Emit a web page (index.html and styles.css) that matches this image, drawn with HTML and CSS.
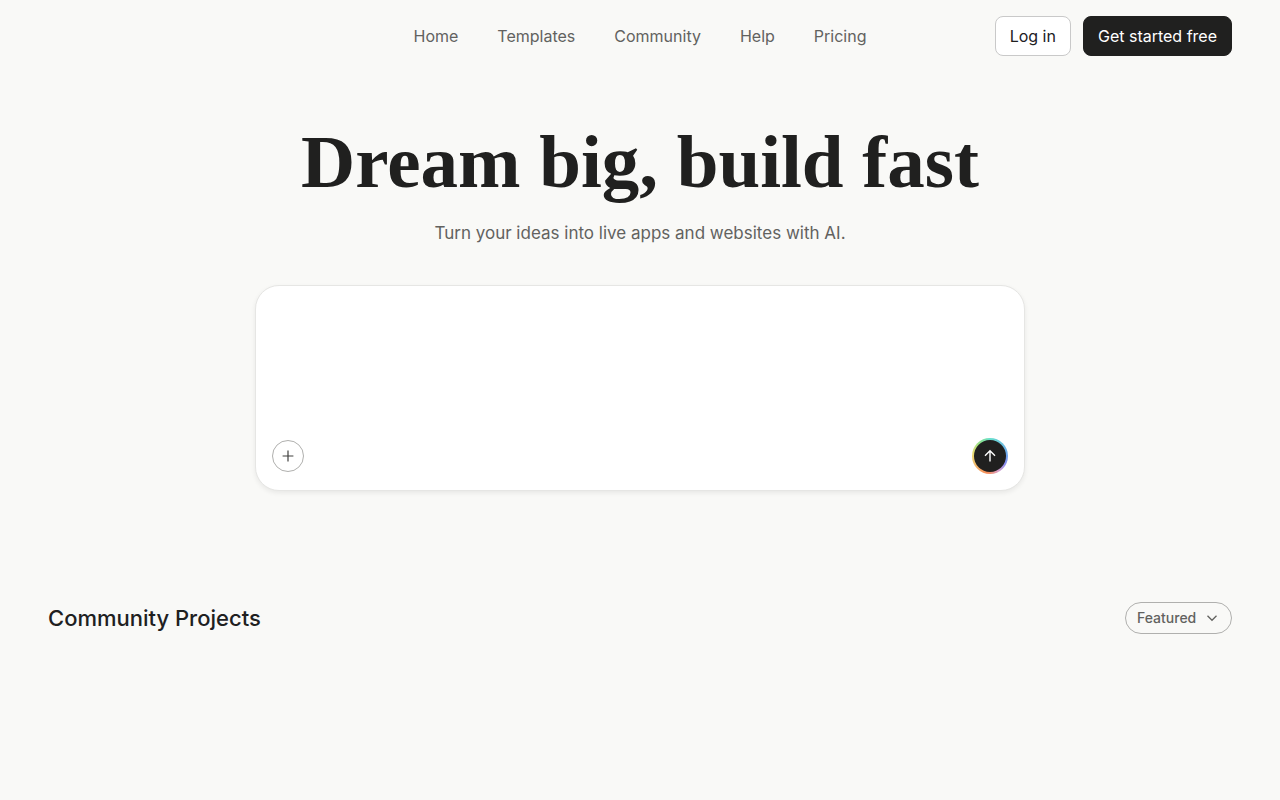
FILE: index.html
```html
<!DOCTYPE html>
<html lang="en">
<head>
<meta charset="utf-8">
<meta name="viewport" content="width=device-width, initial-scale=1">
<title>Dream big, build fast</title>
<link rel="stylesheet" href="styles.css">
</head>
<body>
<header class="site-header">
  <nav class="nav" aria-label="Main">
    <a href="#">Home</a>
    <a href="#">Templates</a>
    <a href="#">Community</a>
    <a href="#">Help</a>
    <a href="#">Pricing</a>
  </nav>
  <div class="actions">
    <button class="button button-light" type="button">Log in</button>
    <button class="button button-dark" type="button">Get started free</button>
  </div>
</header>
<main>
  <section class="hero">
    <h1 class="hero-title">Dream big, build fast</h1>
    <p class="hero-text">Turn your ideas into live apps and websites with AI.</p>
    <form class="prompt">
      <textarea class="prompt-input" aria-label="Describe your idea"></textarea>
      <div class="prompt-bar">
        <button class="round attach" type="button" aria-label="Add attachment">
          <svg width="16" height="16" viewBox="0 0 16 16" fill="none" stroke="currentColor" stroke-width="1.2"><path d="M8 2.6v10.8M2.6 8h10.8"/></svg>
        </button>
        <button class="round send" type="button" aria-label="Send">
          <svg width="16" height="16" viewBox="0 0 16 16" fill="none" stroke="currentColor" stroke-width="1.4"><path d="M8 13.5V3M3 7.8 8 2.8l5 5"/></svg>
        </button>
      </div>
    </form>
  </section>
  <section class="projects">
    <h2 class="projects-title">Community Projects</h2>
    <div class="filter">
      <select class="filter-select" aria-label="Filter projects">
        <option>Featured</option>
      </select>
      <svg class="filter-icon" width="12" height="12" viewBox="0 0 12 12" fill="none" stroke="currentColor" stroke-width="1.3"><path d="m1.5 3.8 4.5 4.5 4.5-4.5"/></svg>
    </div>
  </section>
</main>
</body>
</html>
```
FILE: styles.css
```css
* {
  box-sizing: border-box;
}

body {
  margin: 0;
  background: #f9f9f7;
  color: #20201f;
  font-family: Inter, "Liberation Sans", sans-serif;
}

.site-header {
  display: grid;
  grid-template-columns: 1fr auto 1fr;
  align-items: center;
  padding: 16px 48px;
}

.nav {
  grid-column: 2;
  display: flex;
  gap: 39px;
  font-size: 16px;
  line-height: 24px;
}

.nav a {
  color: #62625f;
  text-decoration: none;
}

.actions {
  display: flex;
  justify-content: flex-end;
  gap: 12px;
}

.button {
  height: 40px;
  padding: 0 14px;
  border: 1px solid #c9c9c9;
  border-radius: 8px;
  font: 400 16px/24px Inter, "Liberation Sans", sans-serif;
  white-space: nowrap;
}

.button-light {
  background: #fff;
  color: #20201f;
}

.button-dark {
  border-color: #20201f;
  background: #20201f;
  color: #fff;
}

.hero {
  display: flex;
  flex-direction: column;
  align-items: center;
  padding: 34px 24px 0;
}

.hero-title {
  margin: 0;
  font-family: "Liberation Serif", serif;
  font-size: 75px;
  font-weight: 700;
  line-height: 112px;
  text-align: center;
}

.hero-text {
  margin: 1px 0 0;
  color: #62625f;
  font-size: 17px;
  line-height: 28px;
  text-align: center;
}

.prompt {
  width: 100%;
  max-width: 770px;
  margin: 38px 0 0;
  padding: 16px;
  border: 1px solid #e6e6e4;
  border-radius: 24px;
  background: #fff;
  box-shadow: 0 2px 5px rgba(0, 0, 0, 0.07);
}

.prompt-input {
  display: block;
  width: 100%;
  height: 136px;
  padding: 0;
  border: 0;
  outline: 0;
  background: transparent;
  font: inherit;
  resize: none;
}

.prompt-bar {
  display: flex;
  align-items: center;
  justify-content: space-between;
}

.round {
  display: grid;
  place-items: center;
  padding: 0;
  border-radius: 50%;
}

.attach {
  width: 32px;
  height: 32px;
  border: 1px solid #b0b0ae;
  background: #fff;
  color: #40403e;
}

.send {
  width: 36px;
  height: 36px;
  border: 2px solid transparent;
  background:
    linear-gradient(#20201f, #20201f) padding-box,
    conic-gradient(#68e0ce, #6da2ee 25%, #8c8cf0 33%, #d9a0c8 42%, #f58a58 52%, #f2b56b 65%, #e8dc70 78%, #8ce08a 90%, #68e0ce) border-box;
  color: #fff;
}

.projects {
  display: flex;
  align-items: center;
  justify-content: space-between;
  padding: 111px 48px 48px;
}

.projects-title {
  margin: 0;
  font-size: 22px;
  font-weight: 500;
  line-height: 32px;
}

.filter {
  position: relative;
  color: #62625f;
}

.filter-select {
  display: block;
  height: 32px;
  padding: 0 34px 0 11px;
  border: 1px solid #b0b0ae;
  border-radius: 16px;
  appearance: none;
  background: transparent;
  color: inherit;
  font: 500 14px/20px Inter, "Liberation Sans", sans-serif;
}

.filter-icon {
  position: absolute;
  top: 10px;
  right: 14px;
  pointer-events: none;
}
```
